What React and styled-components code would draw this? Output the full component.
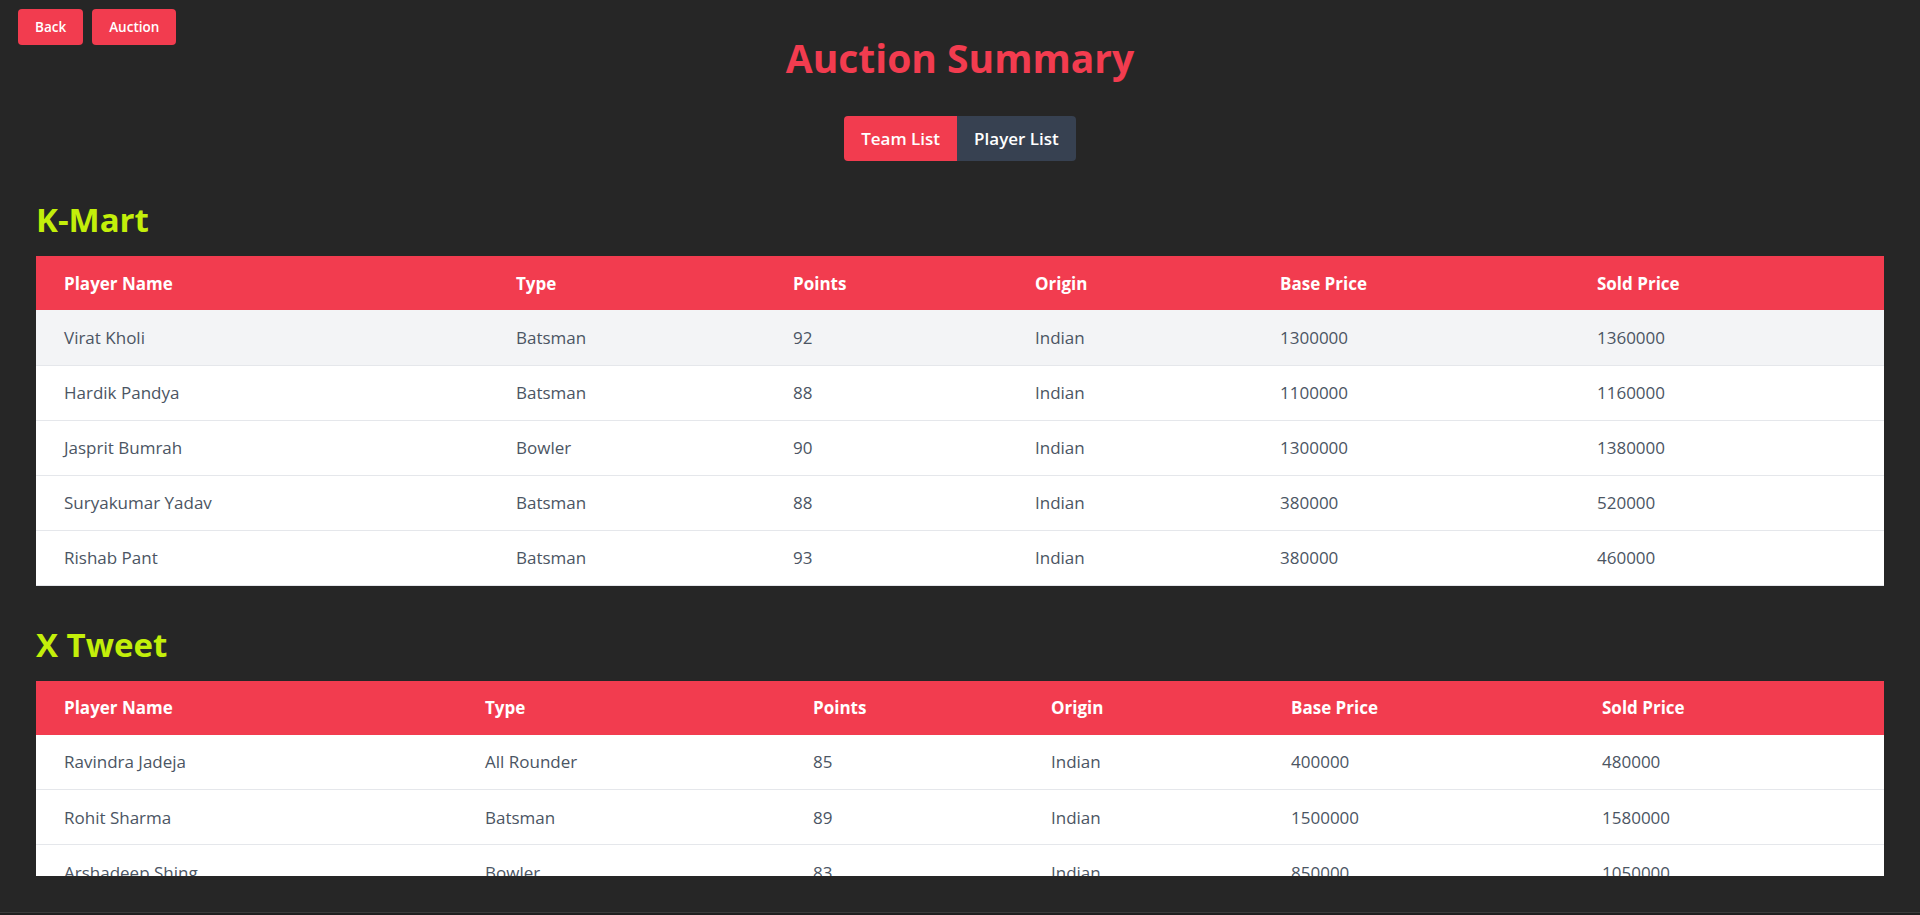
import styled, { createGlobalStyle } from "styled-components";

const colors = {
  page: "#262626",
  red: "#f23c4f",
  slate: "#374151",
  lime: "#c3ef0a",
  text: "#4b5563",
  rowHover: "#f3f4f6",
  line: "#e5e7eb",
};

const teams = [
  {
    name: "K-Mart",
    widths: [452, 277, 242, 245, 317, 315],
    players: [
      ["Virat Kholi", "Batsman", 92, "Indian", 1300000, 1360000],
      ["Hardik Pandya", "Batsman", 88, "Indian", 1100000, 1160000],
      ["Jasprit Bumrah", "Bowler", 90, "Indian", 1300000, 1380000],
      ["Suryakumar Yadav", "Batsman", 88, "Indian", 380000, 520000],
      ["Rishab Pant", "Batsman", 93, "Indian", 380000, 460000],
    ],
    hovered: 0,
  },
  {
    name: "X Tweet",
    widths: [421, 328, 238, 240, 311, 310],
    players: [
      ["Ravindra Jadeja", "All Rounder", 85, "Indian", 400000, 480000],
      ["Rohit Sharma", "Batsman", 89, "Indian", 1500000, 1580000],
      ["Arshadeep Shing", "Bowler", 83, "Indian", 850000, 1050000],
    ],
  },
];

const columns = ["Player Name", "Type", "Points", "Origin", "Base Price", "Sold Price"];

export default function App() {
  return (
    <>
      <GlobalStyle />
      <Page>
        <Header>
          <NavButtons>
            <SmallButton>Back</SmallButton>
            <SmallButton>Auction</SmallButton>
          </NavButtons>
          <Title>Auction Summary</Title>
        </Header>

        <Tabs>
          <Tab active>Team List</Tab>
          <Tab>Player List</Tab>
        </Tabs>

        <Scroller>
          {teams.map((team) => (
            <Section key={team.name}>
              <TeamName>{team.name}</TeamName>
              <Table>
                <colgroup>
                  {team.widths.map((w, i) => (
                    <col key={i} style={{ width: `${(w / 1848) * 100}%` }} />
                  ))}
                </colgroup>
                <thead>
                  <tr>
                    {columns.map((c) => (
                      <Th key={c}>{c}</Th>
                    ))}
                  </tr>
                </thead>
                <tbody>
                  {team.players.map((p, i) => (
                    <Row key={p[0]} highlighted={team.hovered === i}>
                      {p.map((v, j) => (
                        <Td key={j}>{v}</Td>
                      ))}
                    </Row>
                  ))}
                </tbody>
              </Table>
            </Section>
          ))}
        </Scroller>
        <BottomEdge />
      </Page>
    </>
  );
}

const GlobalStyle = createGlobalStyle`
  * { box-sizing: border-box; }
  body {
    margin: 0;
    background: ${colors.page};
    font-family: "Open Sans", "Noto Sans", sans-serif;
  }
`;

const Page = styled.div`
  height: 100vh;
  display: flex;
  flex-direction: column;
  background: ${colors.page};
  overflow: hidden;
`;

const Header = styled.header`
  display: grid;
  grid-template-columns: 1fr auto 1fr;
  align-items: start;
  padding: 9px 18px 0;
`;

const NavButtons = styled.div`
  display: flex;
  gap: 9px;
`;

const SmallButton = styled.button`
  height: 36px;
  padding: 0 17px;
  border: none;
  border-radius: 4px;
  background: ${colors.red};
  color: #fff;
  font-family: inherit;
  font-size: 13.5px;
  font-weight: 600;
  cursor: pointer;
`;

const Title = styled.h1`
  margin: 25px 0 0;
  font-size: 39px;
  line-height: 48px;
  font-weight: 700;
  color: ${colors.red};
  text-align: center;
`;

const Tabs = styled.div`
  display: flex;
  justify-content: center;
  margin-top: 34px;
`;

const Tab = styled.button`
  height: 45px;
  padding: 0 17px;
  border: none;
  background: ${(p) => (p.active ? colors.red : colors.slate)};
  color: #fff;
  font-family: inherit;
  font-size: 17px;
  font-weight: 600;
  cursor: pointer;
  &:first-child { border-radius: 4px 0 0 4px; }
  &:last-child { border-radius: 0 4px 4px 0; }
`;

const Scroller = styled.div`
  flex: 1;
  min-height: 0;
  margin-bottom: 36px;
  padding: 0 36px;
  overflow-y: auto;
  scrollbar-width: none;
  &::-webkit-scrollbar { display: none; }
`;

const Section = styled.section`
  padding-top: 38px;
`;

const TeamName = styled.h2`
  margin: 0 0 16px;
  font-size: 33px;
  line-height: 41px;
  font-weight: 700;
  color: ${colors.lime};
`;

const Table = styled.table`
  width: 100%;
  border-collapse: collapse;
  table-layout: fixed;
  background: #fff;
`;

const Th = styled.th`
  height: 54px;
  padding: 0 28px;
  background: ${colors.red};
  color: #fff;
  text-align: left;
  font-size: 17px;
  font-weight: 700;
`;

const Row = styled.tr`
  background: ${(p) => (p.highlighted ? colors.rowHover : "#fff")};
  border-bottom: 1px solid ${colors.line};
`;

const Td = styled.td`
  height: 55px;
  padding: 0 28px;
  color: ${colors.text};
  font-size: 17px;
`;

const BottomEdge = styled.div`
  height: 3px;
  border-top: 1px solid #3b3b3b;
  background: #1f1f1f;
`;
